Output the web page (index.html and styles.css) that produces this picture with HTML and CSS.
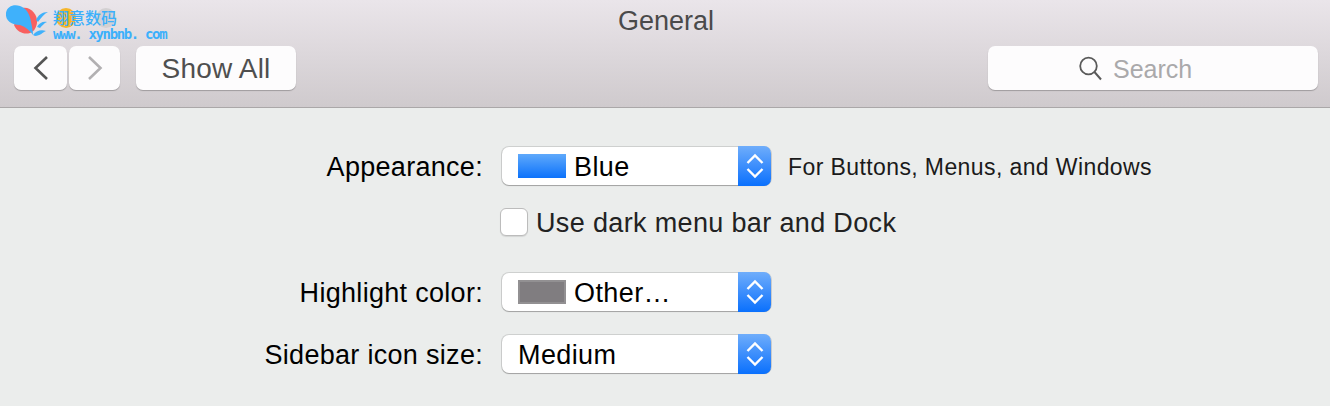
FILE: index.html
```html
<!DOCTYPE html>
<html lang="en">
<head>
<meta charset="utf-8">
<title>General</title>
<link rel="stylesheet" href="styles.css">
</head>
<body>
<div class="window">
  <header class="toolbar">
    <span class="light light-yellow"></span>
    <span class="light light-gray"></span>
    <div class="watermark">
      <svg class="wm-logo" width="50" height="40" viewBox="0 0 50 40">
        <path d="M22 8C30 6 38 14 37 23C36 29 33 32 30 33C24 35 17 32 14 25Z" fill="#f8605f"/>
        <path d="M6 13C7 6 14 4 20 6C26 8 30 14 31 22C32 27 33 31 33 35C30 31 26 27 20 25C12 25 5 21 6 13Z" fill="#3fb1fb"/>
        <path d="M36 20C38 15 42 12 48 12C44 14 41 18 38 22ZM37 27C39 23 43 21 47 22C44 23 42 26 40 28ZM33 35C36 31 41 29 46 31C43 32 40 36 35 36Z" fill="#3fb1fb"/>
      </svg>
      <div class="wm-text">
        <div class="wm-cn">翔意数码</div>
        <div class="wm-url">www. xynbnb. com</div>
      </div>
    </div>
    <div class="title">General</div>
    <div class="tools">
      <div class="nav-group">
        <button class="btn btn-back" aria-label="Back">
          <svg width="18" height="26" viewBox="0 0 18 26"><path d="M15 2L3.500 13L15 24" fill="none" stroke="#555" stroke-width="2.600"/></svg>
        </button>
        <button class="btn btn-forward" aria-label="Forward">
          <svg width="18" height="26" viewBox="0 0 18 26"><path d="M3 2L14.500 13L3 24" fill="none" stroke="#b2b0b2" stroke-width="2.600"/></svg>
        </button>
      </div>
      <button class="btn btn-showall"><span class="btn-text">Show All</span></button>
      <div class="search">
        <svg width="24" height="26" viewBox="0 0 24 26"><circle cx="10.500" cy="11" r="8.300" fill="none" stroke="#5a5a5a" stroke-width="1.800"/><path d="M16.500 17L23 24.500" fill="none" stroke="#5a5a5a" stroke-width="2"/></svg>
        <span class="search-text">Search</span>
      </div>
    </div>
  </header>
  <main class="form">
    <div class="row row-appearance">
      <label class="label">Appearance:</label>
      <div class="select">
        <span class="swatch swatch-blue"></span>
        <span class="value">Blue</span>
        <span class="stepper"><svg width="22" height="32" viewBox="0 0 22 32"><path d="M3.500 13L11 5.500L18.500 13M3.500 19L11 26.500L18.500 19" fill="none" stroke="#fff" stroke-width="2.400"/></svg></span>
      </div>
      <span class="note">For Buttons, Menus, and Windows</span>
    </div>
    <div class="row row-check">
      <span class="label"></span>
      <span class="checkbox"></span>
      <span class="check-label">Use dark menu bar and Dock</span>
    </div>
    <div class="row row-highlight">
      <label class="label">Highlight color:</label>
      <div class="select">
        <span class="swatch swatch-gray"></span>
        <span class="value">Other…</span>
        <span class="stepper"><svg width="22" height="32" viewBox="0 0 22 32"><path d="M3.500 13L11 5.500L18.500 13M3.500 19L11 26.500L18.500 19" fill="none" stroke="#fff" stroke-width="2.400"/></svg></span>
      </div>
    </div>
    <div class="row row-sidebar">
      <label class="label">Sidebar icon size:</label>
      <div class="select">
        <span class="value">Medium</span>
        <span class="stepper"><svg width="22" height="32" viewBox="0 0 22 32"><path d="M3.500 13L11 5.500L18.500 13M3.500 19L11 26.500L18.500 19" fill="none" stroke="#fff" stroke-width="2.400"/></svg></span>
      </div>
    </div>
  </main>
</div>
</body>
</html>
```
FILE: styles.css
```css
* { box-sizing: border-box; }
html, body { margin: 0; height: 100%; overflow: hidden; }
body { font-family: "Liberation Sans", Arial, sans-serif; background: #ebedec; }
.window { height: 406px; display: flex; flex-direction: column; }

.toolbar {
  position: relative;
  height: 108px;
  flex: none;
  padding: 0 12px 17px 14px;
  display: flex;
  flex-direction: column;
  background: linear-gradient(#eae5ea, #cfcacd);
  border-bottom: 1px solid #aaa7a8;
}
.title {
  height: 46px;
  padding-top: 6px;
  text-align: center;
  font-size: 27px;
  letter-spacing: 0;
  line-height: 30px;
  color: #4a4a4a;
}
.tools { display: flex; align-items: stretch; height: 44px; }
.nav-group { display: flex; gap: 2px; margin-right: 16px; }
.btn {
  padding: 0;
  border: 0;
  border-radius: 7px;
  background: #fdfcfd;
  box-shadow: 0 1px 1px rgba(0, 0, 0, .25);
  font-family: inherit;
  display: flex;
  align-items: center;
  justify-content: center;
}
.btn-back { width: 53px; }
.btn-forward { width: 51px; }
.btn-showall { width: 160px; padding-top: 2px; font-size: 28px; letter-spacing: .2px; color: #4f4f4f; }
.search {
  width: 330px;
  margin-left: auto;
  border-radius: 7px;
  background: #fdfcfd;
  box-shadow: 0 1px 1px rgba(0, 0, 0, .25);
  display: flex;
  align-items: center;
  padding-left: 90px;
  gap: 11px;
}
.search-text { padding-top: 2px; font-size: 25px; color: #aaa9ab; }

.light { position: absolute; top: 8px; width: 20px; height: 20px; border-radius: 50%; }
.light-yellow { left: 56px; background: #f5b52a; }
.light-gray { left: 96px; background: #d3d0d2; }

.watermark { position: absolute; left: 0; top: 0; display: flex; gap: 3px; }
.wm-text { color: #3cb0fb; padding-top: 8px; }
.wm-cn { font-family: "Noto Sans CJK SC", sans-serif; font-size: 16px; font-weight: 500; line-height: 18px; }
.wm-url {
  margin-top: 1px;
  font-family: "DejaVu Sans Mono", monospace;
  font-size: 14px;
  line-height: 14px;
  font-weight: 700;
  white-space: nowrap;
  letter-spacing: -1.350px;
}

.form { padding-top: 38px; }
.row { display: flex; align-items: center; }
.row-appearance, .row-highlight, .row-sidebar { height: 40px; }
.row-check { height: 28px; margin-top: 22px; }
.row-highlight { margin-top: 36px; }
.row-sidebar { margin-top: 22px; }
.label {
  width: 483px;
  margin-right: 19px;
  padding-top: 2px;
  flex: none;
  text-align: right;
  font-size: 27px;
  letter-spacing: .3px;
  color: #000;
}
.row-check .label { margin-right: 18px; }
.select {
  position: relative;
  width: 269px;
  height: 38px;
  display: flex;
  align-items: center;
  padding-left: 16px;
  border-radius: 7px;
  background: #fff;
  box-shadow: 0 0 0 1px rgba(0, 0, 0, .12), 0 1px 1px rgba(0, 0, 0, .22);
}
.swatch { width: 48px; height: 24px; margin-right: 8px; flex: none; }
.swatch-blue { background: linear-gradient(#5fa9fb, #0c72fb); }
.swatch-gray { background: #807d80; border: 2px solid #929092; }
.value { padding-top: 2px; font-size: 27px; letter-spacing: .4px; color: #000; }
.stepper {
  position: absolute;
  right: 0;
  top: -1px;
  bottom: -1px;
  width: 33px;
  border-radius: 0 7px 7px 0;
  background: linear-gradient(#6fadfb, #0a70fd);
  display: flex;
  align-items: center;
  justify-content: center;
}
.note { margin-left: 17px; padding-top: 2px; font-size: 23px; letter-spacing: .4px; color: #1a1a1a; }
.checkbox {
  width: 28px;
  height: 28px;
  margin-left: -1px;
  flex: none;
  border-radius: 6px;
  background: #fff;
  border: 1px solid #bcbcbc;
  box-shadow: 0 1px 1px rgba(0, 0, 0, .1);
}
.check-label { margin-left: 8px; padding-top: 2px; font-size: 27px; letter-spacing: .35px; color: #222; }
```
